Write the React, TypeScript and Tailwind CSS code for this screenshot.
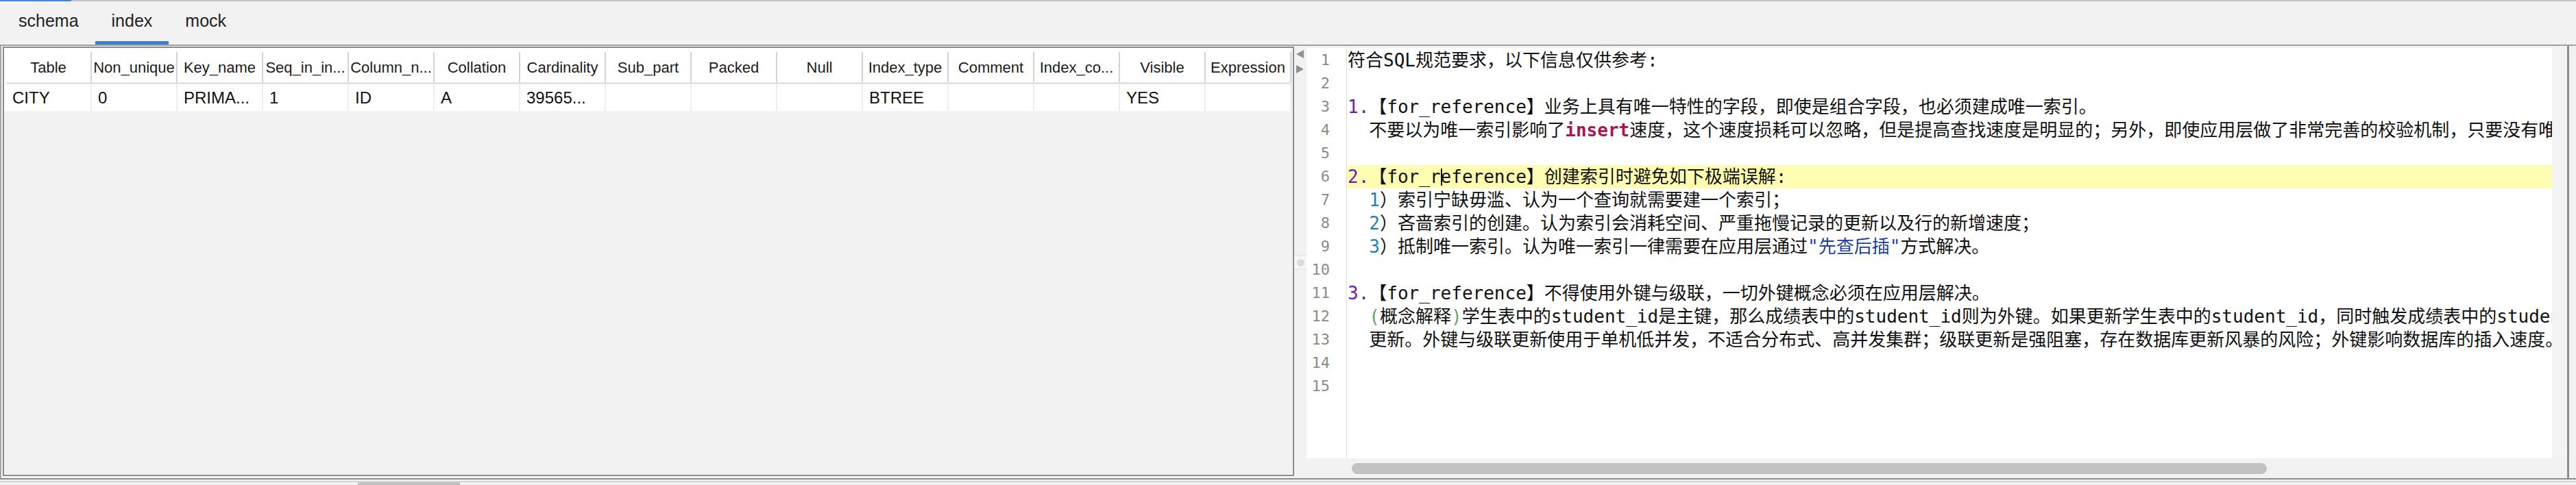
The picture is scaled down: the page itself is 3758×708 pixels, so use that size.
import React from 'react';

const COLUMNS: [string, string][] = [
  ['Table', 'CITY'],
  ['Non_unique', '0'],
  ['Key_name', 'PRIMA...'],
  ['Seq_in_in...', '1'],
  ['Column_n...', 'ID'],
  ['Collation', 'A'],
  ['Cardinality', '39565...'],
  ['Sub_part', ''],
  ['Packed', ''],
  ['Null', ''],
  ['Index_type', 'BTREE'],
  ['Comment', ''],
  ['Index_co...', ''],
  ['Visible', 'YES'],
  ['Expression', ''],
];

type Seg = { t?: string; c?: string; cursor?: boolean };

const PURPLE = 'text-[#6a1bb5]';
const TEAL = 'text-[#1f82b4]';
const BLUE = 'text-[#1d3fa6]';
const GREEN = 'text-[#6aa46a]';

const LINES: Seg[][] = [
  [{ t: '符合SQL规范要求，以下信息仅供参考:' }],
  [],
  [{ t: '1.', c: PURPLE }, { t: '【for_reference】业务上具有唯一特性的字段，即使是组合字段，也必须建成唯一索引。' }],
  [
    { t: '  不要以为唯一索引影响了' },
    { t: 'insert', c: 'text-[#a8174f] font-bold' },
    { t: '速度，这个速度损耗可以忽略，但是提高查找速度是明显的；另外，即使应用层做了非常完善的校验机制，只要没有唯一索引，根据墨菲定律，必然有脏数据产生。' },
  ],
  [],
  [{ t: '2.', c: PURPLE }, { t: '【for_r' }, { cursor: true }, { t: 'eference】创建索引时避免如下极端误解:' }],
  [{ t: '  ' }, { t: '1', c: TEAL }, { t: '）索引宁缺毋滥、认为一个查询就需要建一个索引；' }],
  [{ t: '  ' }, { t: '2', c: TEAL }, { t: '）吝啬索引的创建。认为索引会消耗空间、严重拖慢记录的更新以及行的新增速度；' }],
  [
    { t: '  ' },
    { t: '3', c: TEAL },
    { t: '）抵制唯一索引。认为唯一索引一律需要在应用层通过' },
    { t: '"先查后插"', c: BLUE },
    { t: '方式解决。' },
  ],
  [],
  [{ t: '3.', c: PURPLE }, { t: '【for_reference】不得使用外键与级联，一切外键概念必须在应用层解决。' }],
  [
    { t: '  ' },
    { t: '(', c: GREEN },
    { t: '概念解释' },
    { t: ')', c: GREEN },
    { t: '学生表中的student_id是主键，那么成绩表中的student_id则为外键。如果更新学生表中的student_id，同时触发成绩表中的student_id更新，即为级联更新。' },
  ],
  [{ t: '  更新。外键与级联更新使用于单机低并发，不适合分布式、高并发集群；级联更新是强阻塞，存在数据库更新风暴的风险；外键影响数据库的插入速度。' }],
  [],
  [],
];

function Tab({ label, active }: { label: string; active?: boolean }) {
  return (
    <div className="flex flex-col">
      <div className="h-[58px] px-[24px] flex items-center text-[25px] text-[#222]">{label}</div>
      <div className={active ? 'h-[5px] bg-[#3f7fcb]' : 'h-[5px]'} />
    </div>
  );
}

function IndexTable() {
  return (
    <div className="w-fit bg-white pl-[3px] pt-[6px]">
      <div className="flex h-[44px] bg-white">
        {COLUMNS.map(([h]) => (
          <div
            key={h}
            className="w-[125px] shrink-0 border-r-2 border-[#d3d3d3] flex items-center justify-center overflow-hidden whitespace-nowrap text-[22px] text-[#1c1c1c]"
          >
            {h}
          </div>
        ))}
      </div>
      <div className="h-[3px] bg-[#e4e4e4]" />
      <div className="flex h-[39px] bg-white">
        {COLUMNS.map(([h, v]) => (
          <div
            key={h}
            className="w-[125px] shrink-0 border-r-2 border-[#efefef] flex items-center pl-[9px] overflow-hidden whitespace-nowrap text-[24px] text-[#111]"
          >
            {v}
          </div>
        ))}
      </div>
    </div>
  );
}

function Divider() {
  return (
    <div className="w-[18px] shrink-0 flex flex-col">
      <div className="h-[6px]" />
      <svg width="18" height="12" viewBox="0 0 18 12">
        <polygon points="14,0 14,12 3,6" fill="#8f8f8f" />
      </svg>
      <div className="h-[10px]" />
      <svg width="18" height="12" viewBox="0 0 18 12">
        <polygon points="3,0 3,12 14,6" fill="#8f8f8f" />
      </svg>
      <div className="h-[266px]" />
      <div className="h-[20px] bg-[#f7f7f7] border-y border-[#e2e2e2] flex items-center justify-center">
        <div className="w-[11px] h-[11px] rounded-full bg-[#dcdcdc]" />
      </div>
    </div>
  );
}

function Editor() {
  return (
    <div className="flex-1 min-w-0 overflow-hidden flex flex-col border-r-[3px] border-[#8e8e8e] pt-[3px]">
      <div className="flex h-[599px] min-w-0">
        <div className="w-[58px] shrink-0 bg-white pt-[1px] font-['DejaVu_Sans_Mono',monospace] text-[22px] text-[#8a8a8a]">
          {LINES.map((_, i) => (
            <div key={i} className="h-[34px] leading-[34px] text-right pr-[24px]">
              {i + 1}
            </div>
          ))}
        </div>
        <div className="w-[1px] shrink-0 bg-[#dcdcdc]" />
        <div className="flex-1 min-w-0 bg-white overflow-hidden pt-[1px] font-['DejaVu_Sans_Mono','Noto_Sans_CJK_SC',monospace] text-[26px] text-[#111]">
          {LINES.map((segs, i) => (
            <div
              key={i}
              className={
                'h-[34px] leading-[34px] whitespace-pre pl-[1px] ' + (i === 5 ? 'bg-[#fefdb1]' : '')
              }
            >
              {segs.map((s, j) =>
                s.cursor ? (
                  <span key={j} className="inline-block w-[2px] h-[25px] bg-black -mr-[2px] align-[-4px]" />
                ) : (
                  <span key={j} className={s.c}>
                    {s.t}
                  </span>
                )
              )}
            </div>
          ))}
        </div>
        <div className="w-[22px] shrink-0 bg-[#f3f3f3]" />
      </div>
      <div className="flex-1 bg-[#f2f2f2] pt-[7px] pl-[66px]">
        <div className="w-[1335px] h-[16px] rounded-full bg-[#c2c2c2]" />
      </div>
    </div>
  );
}

export default function App() {
  return (
    <div className="w-[3758px] h-[708px] overflow-hidden bg-[#f2f2f2] flex flex-col font-['Liberation_Sans',Arial,sans-serif]">
      <div className="h-[2px] flex">
        <div className="w-[104px] bg-[#4a84cc]" />
        <div className="flex-1 bg-[#c6c6c6]" />
      </div>
      <div className="h-[63px] flex pl-[3px]">
        <Tab label="schema" />
        <Tab label="index" active />
        <Tab label="mock" />
      </div>
      <div className="h-[2px] bg-[#a2a2a2]" />
      <div className="h-[631px] flex">
        <div className="w-[2px] shrink-0 bg-[#a8a8a8]" />
        <div className="w-[1886px] shrink-0 pl-[2px] pt-[1px] pb-[3px]">
          <div className="h-full border-2 border-[#8c8c8c] bg-[#f2f2f2] overflow-hidden">
            <IndexTable />
          </div>
        </div>
        <Divider />
        <Editor />
        <div className="w-[10px] shrink-0" />
      </div>
      <div className="h-[2px] bg-[#8e8e8e]" />
      <div className="h-[2px]" />
      <div className="h-[2px] bg-[#d4d4d4]" />
      <div className="flex-1 pl-[522px]">
        <div className="w-[149px] h-full bg-[#c0c0c0]" />
      </div>
    </div>
  );
}
